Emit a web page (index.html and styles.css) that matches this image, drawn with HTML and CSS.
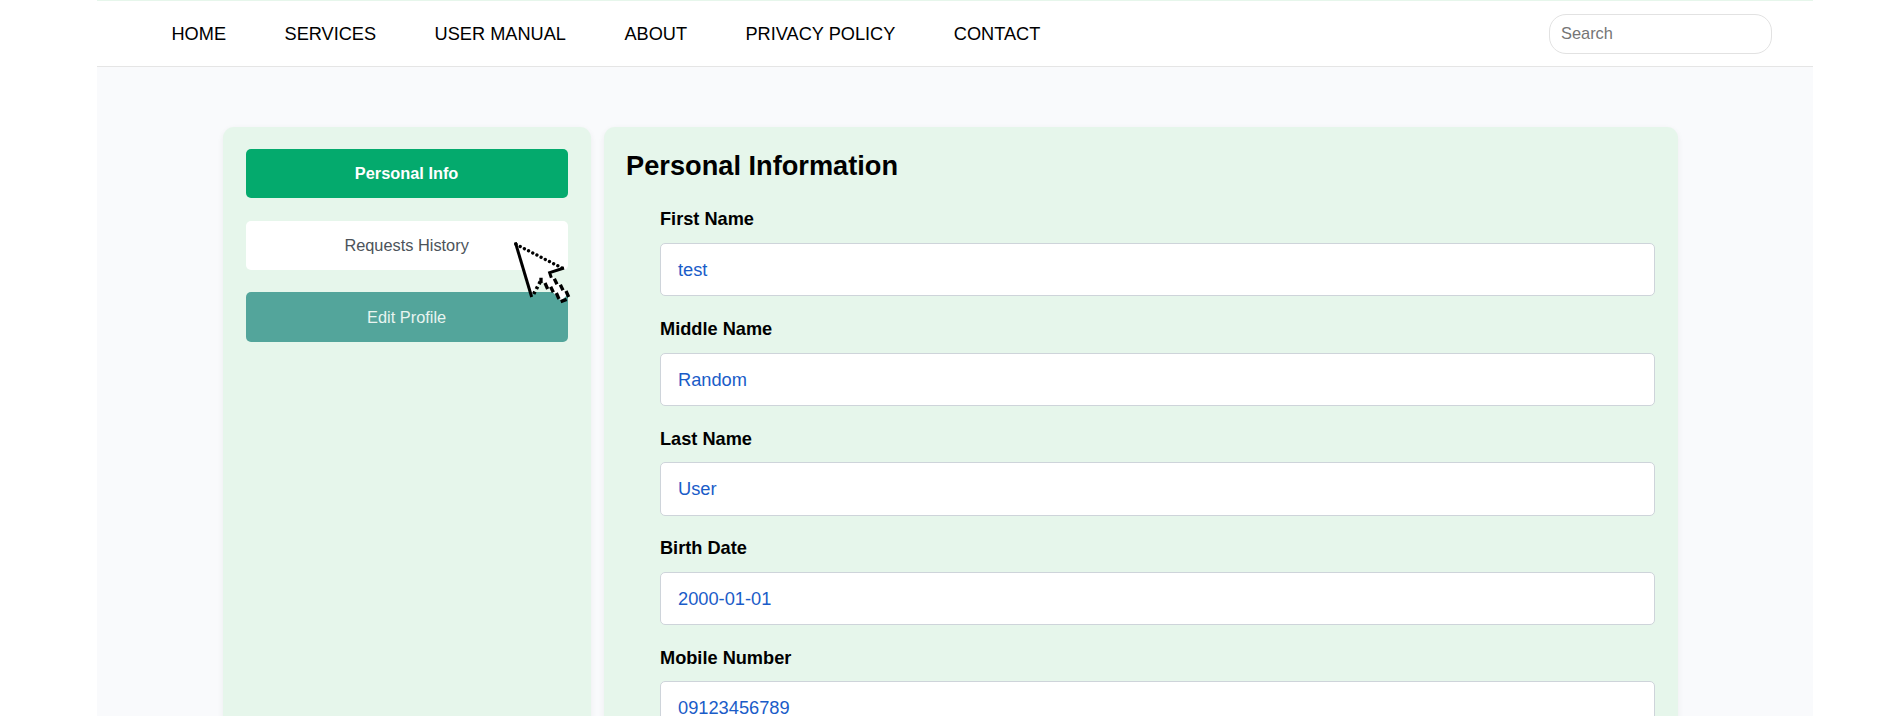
FILE: index.html
```html
<!DOCTYPE html>
<html lang="en">
<head>
<meta charset="utf-8">
<title>Personal Information</title>
<link rel="stylesheet" href="styles.css">
</head>
<body>
<div class="page">
  <header class="header">
    <nav class="nav">
      <a>HOME</a><a>SERVICES</a><a>USER MANUAL</a><a>ABOUT</a><a>PRIVACY POLICY</a><a>CONTACT</a>
    </nav>
    <input class="search" type="text" placeholder="Search">
  </header>
  <main class="main">
    <aside class="card sidebar">
      <a class="btn active">Personal Info</a>
      <a class="btn">Requests History</a>
      <a class="btn edit">Edit Profile</a>
    </aside>
    <section class="card content">
      <h2>Personal Information</h2>
      <div class="field"><div class="label">First Name</div><div class="value">test</div></div>
      <div class="field"><div class="label">Middle Name</div><div class="value">Random</div></div>
      <div class="field"><div class="label">Last Name</div><div class="value">User</div></div>
      <div class="field"><div class="label">Birth Date</div><div class="value">2000-01-01</div></div>
      <div class="field"><div class="label">Mobile Number</div><div class="value">09123456789</div></div>
    </section>
  </main>
</div>
<svg class="cursor" width="100" height="90" viewBox="0 0 300 270" fill="none" stroke="#000" stroke-width="9">
  <path d="M77 56L125 211L154 164L213 228L234 208L180 144L220 130Z" fill="#fff" stroke="none"/>
  <path d="M76 52L125 216"/>
  <path d="M78 58L216 129" stroke-width="10" stroke-linecap="round" stroke-dasharray="0.1 14"/>
  <path d="M222 129L179 143L184 158"/>
  <path d="M131 207L153 166" stroke-width="11" stroke-dasharray="8 9"/>
  <path d="M153 158V174M165 174L173 192M182 185L190 202M199 204L207 222M193 161L201 178M211 179L219 196M228 198L236 216M212 230L230 223" stroke-width="10"/>
</svg>
</body>
</html>
```
FILE: styles.css
```css
* { box-sizing: border-box; }
body {
  margin: 0;
  height: 716px;
  overflow: hidden;
  background: #fff;
  font-family: "Liberation Sans", Arial, sans-serif;
  font-size: 18.25px;
  color: #000;
}
.page {
  width: 1716px;
  height: 716px;
  margin-left: 97px;
  background: #f9fafc;
  overflow: hidden;
}
.header {
  display: flex;
  align-items: center;
  justify-content: space-between;
  height: 67px;
  padding: 0 41.5px 0 74.5px;
  background: #fff;
  border-top: 1px solid #e6f6eb;
  border-bottom: 1px solid #e5e5e5;
}
.nav { display: flex; gap: 58.5px; padding-top: 2px; white-space: nowrap; font-size: 18.18px; }
.search {
  width: 223px;
  height: 40px;
  padding: 0 11.5px;
  border: 1px solid #e2e2e2;
  border-radius: 17px;
  background: #fff;
  font: 16.4px "Liberation Sans", Arial, sans-serif;
}
.search::placeholder { color: #757575; }
.main { display: flex; gap: 12.5px; padding: 60px 0 0 125.5px; }
.card {
  height: 700px;
  background: #e6f6eb;
  border-radius: 11px;
  box-shadow: 0 2px 6px rgba(0, 0, 0, .06);
}
.sidebar {
  display: flex;
  flex-direction: column;
  gap: 22.5px;
  width: 368.5px;
  padding: 22.4px 22.8px 22.4px 23.5px;
}
.btn {
  display: flex;
  align-items: center;
  justify-content: center;
  height: 49px;
  padding-right: 1px;
  border-radius: 5px;
  background: #fff;
  color: #4c535a;
  font-size: 16.35px;
}
.active { background: #04aa6d; color: #fff; font-weight: bold; }
.edit { height: 49.5px; background: #53a59b; color: #e8f4f0; }
.content { width: 1074px; padding: 23px 22.6px 0 22.6px; }
h2 { margin: 0 0 21.4px; font-size: 27.2px; line-height: 32px; }
.field { height: 109.6px; margin-left: 33.9px; }
.label { height: 39.6px; font-size: 18.2px; font-weight: bold; line-height: 33.2px; }
.value {
  height: 53.4px;
  padding: 0 17px;
  border: 1px solid #ced4da;
  border-radius: 5px;
  background: #fff;
  color: #1a5cc8;
  line-height: 51.4px;
}
.cursor { position: absolute; left: 490px; top: 225px; }
```
